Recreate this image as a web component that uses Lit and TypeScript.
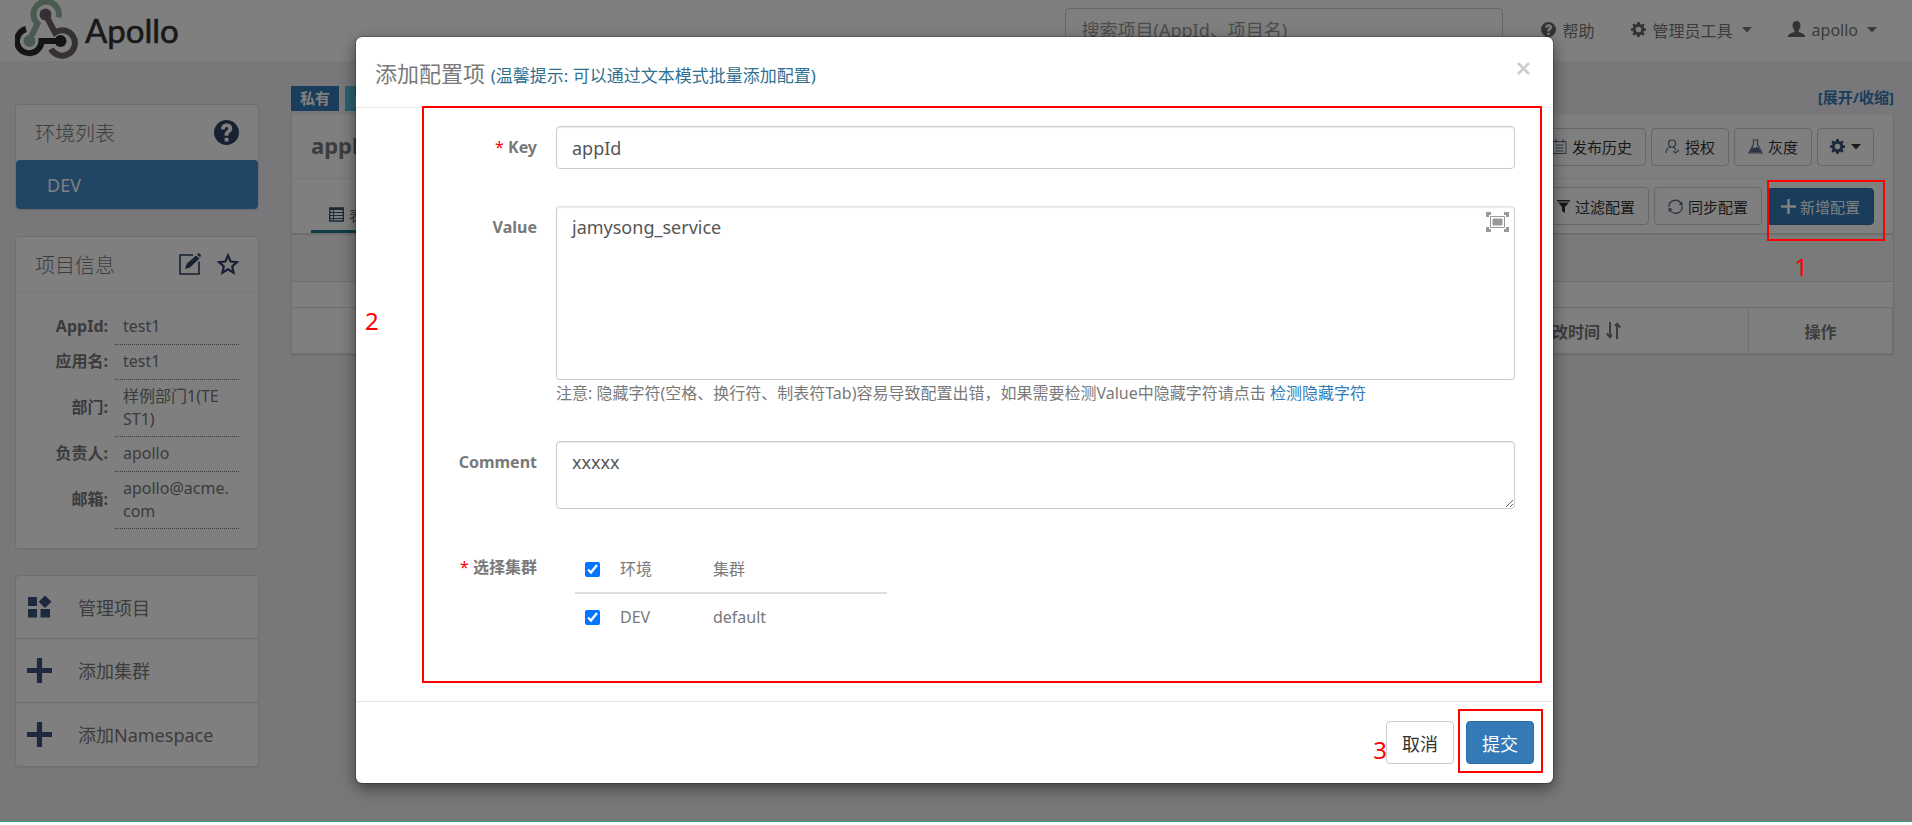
import { LitElement, html, css, svg } from "lit";
import { customElement } from "lit/decorators.js";

const base = css`
  *, *::before, *::after { box-sizing: border-box; }
  a { color: inherit; text-decoration: none; }
  button, input, textarea { font: inherit; margin: 0; }
  button { cursor: pointer; }
  svg { display: block; flex: none; }
`;

const caret = html`<svg width="10" height="6" viewBox="0 0 10 6" fill="currentColor"><path d="M0 0h10L5 5.5z"/></svg>`;

const helpIcon = (size: number) => html`<svg width=${size} height=${size} viewBox="0 0 24 24">
  <path fill="currentColor" fill-rule="evenodd" d="M12 0a12 12 0 1 1 0 24a12 12 0 0 1 0-24zM6.800 9h3.600c0-1.600.6-2.400 1.700-2.400 1 0 1.600.6 1.600 1.500 0 1-.7 1.500-1.600 2.300-1.300 1-1.900 1.900-1.900 3.900v.8h3.600v-.5c0-1.100.5-1.600 1.400-2.400 1.300-1 2.300-2 2.300-4 0-3-2.200-4.800-5.300-4.800-3.400 0-5.400 2-5.400 5.600zM10.200 17v3.600h3.700v-3.600z"/>
</svg>`;

const gearPath = svg`<path fill="currentColor" fill-rule="evenodd" d="M6.700 0h2.600l.4 2.200 1.300.6L12.900 1.500l1.700 1.700-1.300 1.900.6 1.300 2.100.4v2.500l-2.100.4-.6 1.300 1.300 1.900-1.700 1.700-1.900-1.300-1.300.6-.4 2.100H6.700l-.4-2.100-1.300-.6-1.900 1.300-1.700-1.700 1.300-1.900-.6-1.300L0 9.300V6.800l2.100-.4.6-1.300-1.300-1.900 1.700-1.700L5 2.800l1.300-.6zM8 5a3 3 0 1 0 0 6a3 3 0 0 0 0-6z"/>`;
const gearIcon = html`<svg width="15" height="15" viewBox="0 0 16 16">${gearPath}</svg>`;

const plusIcon = (size: number, thick: number) => html`<svg width=${size} height=${size} viewBox="0 0 24 24">
  <path stroke="currentColor" stroke-width=${thick} d="M12 0v24M0 12h24"/></svg>`;

@customElement("apollo-navbar")
class ApolloNavbar extends LitElement {
  static styles = [base, css`
    :host { display: block; background: #fff; }
    .bar { display: flex; align-items: center; height: 61px; padding: 0 35px 2px 15px; color: #777; }
    .brand { margin-right: auto; display: block; }
    .search { width: 438px; height: 43px; padding: 0 16px; border: 1px solid #ccc; border-radius: 4px; color: #555; font-size: 18px; background: #fff; margin-right: 36px; }
    .search::placeholder { color: #999; opacity: 1; }
    .item { display: flex; align-items: center; gap: 7px; font-size: 16px; margin-right: 34px; }
    .item:last-child { margin-right: 0; }
    .item .mark { color: #666; }
    .item svg:last-child { margin-left: 2px; }
  `];
  render() {
    return html`<nav class="bar">
      <a class="brand" href="#" aria-label="Apollo">
        <svg width="164" height="59" viewBox="0 1 164 59" fill="none">
          <g stroke-width="6">
            <path stroke="#93b5a0" d="M43.500 18.500A12.700 12.700 0 1 0 22.500 24.500L14 42"/>
            <path stroke="#6a6166" d="M30.500 15.500L40 33.500A12.700 12.700 0 1 1 36 50"/>
            <path stroke="#2a2a2a" d="M11 30A12.300 12.300 0 1 0 26.500 42H45"/>
          </g>
          <circle cx="14.500" cy="42" r="6" fill="#93b5a0"/>
          <circle cx="30.500" cy="15.500" r="6" fill="#6a6166"/>
          <circle cx="45.500" cy="42" r="6" fill="#2a2a2a"/>
          <text x="70" y="44" fill="#333" stroke="#333" stroke-width="0.600" font-family="Lato, sans-serif" font-size="33">Apollo</text>
        </svg>
      </a>
      <input class="search" type="text" aria-label="搜索项目" placeholder="搜索项目(AppId、项目名)">
      <a class="item" href="#"><span class="mark">${helpIcon(15)}</span>帮助</a>
      <a class="item" href="#"><span class="mark">${gearIcon}</span>管理员工具 ${caret}</a>
      <a class="item" href="#"><span class="mark"><svg width="17" height="17" viewBox="0 0 17 17" fill="currentColor"><path d="M8.500 0C11 0 12.500 1.700 12.500 4.300c0 2-.8 3.800-2 4.900v1.600c.5 1 6.500 1.700 6.500 4.400V16H0v-.8c0-2.700 6-3.400 6.500-4.400V9.200c-1.200-1.100-2-2.900-2-4.900C4.500 1.700 6 0 8.500 0z"/></svg></span>apollo ${caret}</a>
    </nav>`;
  }
}

@customElement("apollo-sidebar")
class ApolloSidebar extends LitElement {
  static styles = [base, css`
    :host { display: flex; flex-direction: column; gap: 26px; width: 244px; flex: none; }
    .card { background: #fff; border: 1px solid #ddd; border-radius: 4px; box-shadow: 0 1px 1px rgba(0,0,0,.05); }
    .head { display: flex; align-items: center; gap: 16px; height: 54px; padding: 0 19px; color: #797979; font-size: 20px; }
    .head .title { margin-right: auto; font-weight: 300; }
    .head .mark { color: #2e4363; }
    .env { display: flex; align-items: center; height: 49px; margin-top: 1px; padding: 0 31px; color: #fff; background: #428bca; border-radius: 4px; font-size: 18px; }
    .info { padding: 17px 19px 19px 18px; border-top: 1px solid #eee; }
    .table { width: 100%; border-collapse: collapse; font-size: 16px; line-height: 23px; color: #777; }
    .table th { width: 81px; text-align: right; padding: 0 7px 0 0; font-weight: 700; white-space: nowrap; }
    .table td { padding: 5px 8px; border-bottom: 1px dotted #777; word-break: break-all; white-space: pre-line; height: 35px; }
    .links a { display: flex; align-items: center; height: 64px; padding: 0 11px; gap: 26px; color: #797979; font-size: 18px; border-top: 1px solid #ddd; }
    .links a:first-child { border-top: 0; height: 62px; }
    .links .mark { color: #3a537b; }
  `];
  render() {
    const rows = [["AppId:", "test1"], ["应用名:", "test1"], ["部门:", "样例部门1(TE\nST1)"], ["负责人:", "apollo"], ["邮箱:", "apollo@acme.\ncom"]];
    return html`
      <section class="card">
        <header class="head"><span class="title">环境列表</span><span class="mark">${helpIcon(25)}</span></header>
        <a class="env" href="#">DEV</a>
      </section>
      <section class="card">
        <header class="head"><span class="title">项目信息</span>
          <span class="mark"><svg width="22" height="22" viewBox="0 0 22 22" fill="none"><path stroke="currentColor" stroke-width="1.600" d="M14 2H1v19h19V8.500"/><path fill="currentColor" d="M6 16l1.500-5L17 2.500 20.500 5.500 11 14.500zM18 1.500l1-1c1-1 3.500 1.500 2.800 2.500l-.8 1.200z"/></svg></span>
          <span class="mark"><svg width="22" height="22" viewBox="0 0 22 22" fill="none"><path stroke="currentColor" stroke-width="2.200" d="M11 2.500l2.600 6 6.400.6-4.800 4.300 1.400 6.300L11 16.400l-5.600 3.300 1.400-6.300L2 9.100l6.400-.6z"/></svg></span>
        </header>
        <div class="info"><table class="table"><tbody>
          ${rows.map(([k, v]) => html`<tr><th scope="row">${k}</th><td>${v}</td></tr>`)}
        </tbody></table></div>
      </section>
      <nav class="card links">
        <a href="#"><span class="mark"><svg width="25" height="24" viewBox="0 0 25 24" fill="currentColor"><path d="M1 2h9v9H1zM1 14h9v8.500H1zM13.500 14H23v8.500h-9.500zM18 .5l6.500 6.300L18 13l-6.300-6.200z"/></svg></span>管理项目</a>
        <a href="#"><span class="mark">${plusIcon(25, 5)}</span>添加集群</a>
        <a href="#"><span class="mark">${plusIcon(25, 5)}</span>添加Namespace</a>
      </nav>`;
  }
}

@customElement("apollo-namespace")
class ApolloNamespace extends LitElement {
  static styles = [base, css`
    :host { display: block; flex: 1; min-width: 0; }
    .top { display: flex; align-items: flex-start; gap: 6px; height: 29px; font-size: 15px; font-weight: 700; }
    .tag { display: flex; align-items: center; height: 25px; padding: 0 9px 2px; color: #fff; background: #337ab7; }
    .tag.kind { background: #5bc0de; }
    .toggle { margin-left: auto; color: #337ab7; font-size: 15px; line-height: 22px; }
    .panel { background: #fff; border: 1px solid #ddd; border-top: 0; box-shadow: 0 1px 1px rgba(0,0,0,.05); }
    .row { display: flex; align-items: center; height: 64px; padding: 0 19px; gap: 5px; border-bottom: 1px solid #eee; }
    .name { margin: 0 auto 0 0; padding-bottom: 4px; font-size: 22px; color: #797979; }
    .row.tools { height: 56px; border-bottom: 2px solid #ddd; }
    .tab { display: flex; align-items: center; gap: 5px; align-self: flex-end; height: 40px; margin-right: auto; padding: 6px 18px 0; border-bottom: 3px solid #22798b; font-size: 15px; color: #666; }
    .tab svg { color: #3a537b; }
    .btn { display: flex; align-items: center; gap: 5px; height: 38px; padding: 0 13px; border: 1px solid #ccc; border-radius: 4px; background: #fff; color: #333; font-size: 15px; white-space: nowrap; }
    .btn svg { color: #5a6b88; }
    .btn.menu { padding: 0 12px; gap: 6px; }
    .btn.menu svg:first-child { color: #3a537b; }
    .btn.menu svg:last-child, .btn.dark svg { color: #333; }
    .btn.primary { background: #337ab7; border-color: #2e6da4; color: #fff; gap: 4px; height: 37px; }
    .btn.primary svg { color: #fff; }
    .strip { height: 47px; background: #f5f5f5; border-bottom: 1px solid #ddd; }
    .gap { height: 25px; }
    .grid { width: 100%; border-collapse: collapse; font-size: 16px; color: #797979; table-layout: fixed; }
    .grid th { height: 46px; padding: 0; border: 1px solid #ddd; border-left: 0; font-weight: 700; }
    .grid th:nth-child(3) { width: 144px; }
    .grid th:nth-child(2) { width: 400px; }
    .sort { display: flex; justify-content: flex-end; align-items: center; gap: 6px; padding-right: 127px; }
  `];
  render() {
    return html`
      <div class="top"><span class="tag">私有</span><span class="tag kind">properties</span><a class="toggle" href="#">[展开/收缩]</a></div>
      <section class="panel">
        <header class="row"><h2 class="name">application</h2>
          <button class="btn"><svg width="15" height="15" viewBox="0 0 15 15" fill="none" stroke="currentColor"><path d="M1 2.500h13v12H1zM4 0v4M11 0v4M3.500 6h8M3.500 9h8M3.500 12h8"/></svg>发布历史</button>
          <button class="btn"><svg width="15" height="15" viewBox="0 0 15 15" fill="none" stroke="currentColor" stroke-width="1.200"><circle cx="7" cy="4.500" r="3.500"/><path d="M1 14c0-3 2-5.500 5-6M8 8c1.500.5 2.500 1.500 3 3M8.500 12l2 2L14 11"/></svg>授权</button>
          <button class="btn"><svg width="15" height="15" viewBox="0 0 15 15" fill="none" stroke="currentColor" stroke-width="1.200"><path d="M4.500 1h6M5.500 1v4.500L1 13.800h13L9.500 5.500V1"/><path fill="currentColor" d="M4.500 9l2 1 2-1.500 2 1.500 1.500 2.500H3z"/></svg>灰度</button>
          <button class="btn menu" aria-label="设置">${gearIcon}${caret}</button>
        </header>
        <div class="row tools">
          <a class="tab" href="#"><svg width="15" height="15" viewBox="0 0 15 15" fill="none" stroke="currentColor"><path d="M.7 1h13.600v13H.7z" stroke-width="1.400"/><path d="M1 2h13" stroke-width="2"/><path d="M1 5.500h13M1 8.500h13M1 11.500h13M4.500 2v12"/></svg>表格</a>
          <button class="btn dark"><svg width="13" height="13" viewBox="0 0 13 13" fill="currentColor"><path d="M0 0h13v1.500H0zM1 2.500h11L8 7v6L5 11V7z"/></svg>过滤配置</button>
          <button class="btn"><svg width="15" height="15" viewBox="0 0 15 15" fill="none" stroke="currentColor" stroke-width="1.400"><path d="M1 8A6.300 6.300 0 0 1 13 5M14 7A6.300 6.300 0 0 1 2 10.500M13.800 3v2.600h-2.500M1.200 12.500V10h2.500"/></svg>同步配置</button>
          <button class="btn primary">${plusIcon(15, 4)}新增配置</button>
        </div>
        <div class="strip"></div><div class="gap"></div>
        <table class="grid"><thead><tr><th></th><th><span class="sort">最后修改时间<svg width="15" height="17" viewBox="0 0 15 17" fill="none" stroke="currentColor" stroke-width="2"><path d="M4 0v15M.8 11.500L4 15.200l2-2.200M11 17V2M14.200 5.500L11 1.800 9 4"/></svg></span></th><th>操作</th></tr></thead></table>
      </section>`;
  }
}

@customElement("apollo-item-modal")
class ApolloItemModal extends LitElement {
  static styles = [base, css`
    :host { display: block; width: 1197px; max-width: 100%; background: #fff; border-radius: 6px; box-shadow: 0 5px 15px rgba(0,0,0,.5), 0 0 0 1px rgba(0,0,0,.2); color: #797979; position: relative; }
    .head { display: flex; align-items: center; height: 71px; padding: 0 19px; border-bottom: 1px solid #e5e5e5; }
    .title { margin: 0; margin-right: auto; font-size: 22px; font-weight: 400; }
    .tip { font-size: 17px; color: #31708f; }
    .close { display: flex; padding: 4px; border: 0; background: none; color: #ccc; margin-bottom: 8px; }
    .body { display: flex; flex-direction: column; min-height: 593px; padding: 18px 38px 0 40px; font-size: 16px; line-height: 22px; }
    .field { display: grid; grid-template-columns: 141px 1fr; column-gap: 19px; }
    .key, .value, .comment { margin-bottom: 37px; }
    .label { text-align: right; font-weight: 700; padding-top: 10px; }
    .req { color: red; font-weight: 400; }
    .control { display: block; width: 100%; padding: 8px 15px; border: 1px solid #ccc; border-radius: 4px; color: #555; font-size: 18px; line-height: 25px; background: #fff; box-shadow: inset 0 1px 1px rgba(0,0,0,.075); outline: 0; }
    input.control { height: 43px; }
    .editor { height: 174px; resize: none; border-top-color: #e5e5e5; }
    .note { height: 68px; resize: vertical; }
    .wrap { position: relative; }
    .full { position: absolute; right: 6px; top: 6px; padding: 0; border: 0; background: none; color: #999; }
    .hint { margin: 2px 0 0; white-space: nowrap; }
    .hint a { color: #337ab7; }
    .clusters { width: 312px; margin-left: 19px; border-collapse: collapse; table-layout: fixed; }
    .clusters th, .clusters td { height: 47px; padding: 0; text-align: left; font-weight: 400; }
    .clusters th { border-bottom: 2px solid #ddd; }
    .clusters .pick { width: 45px; padding-left: 10px; }
    .clusters .env { width: 93px; }
    .check { display: block; width: 15px; height: 15px; margin: 0; accent-color: #0075ff; }
    .foot { display: flex; justify-content: flex-end; gap: 12px; padding: 19px; border-top: 1px solid #e5e5e5; }
    .btn { height: 43px; padding: 0 15px; border: 1px solid #ccc; border-radius: 4px; background: #fff; color: #333; font-size: 18px; }
    .btn.primary { background: #337ab7; border-color: #2e6da4; color: #fff; }
  `];
  render() {
    return html`
      <header class="head">
        <h3 class="title">添加配置项 <span class="tip">(温馨提示: 可以通过文本模式批量添加配置)</span></h3>
        <button class="close" aria-label="关闭"><svg width="13" height="13" viewBox="0 0 13 13"><path stroke="currentColor" stroke-width="2.600" d="M1 1l11 11M12 1L1 12"/></svg></button>
      </header>
      <form class="body" @submit=${(e: Event) => e.preventDefault()}>
        <div class="field key"><label class="label" for="key"><span class="req">*</span> Key</label>
          <input class="control" id="key" type="text" .value=${"appId"}></div>
        <div class="field value"><label class="label" for="value">Value</label>
          <div><div class="wrap"><textarea class="control editor" id="value" .value=${"jamysong_service"}></textarea>
            <button class="full" type="button" aria-label="全屏"><svg width="23" height="20" viewBox="0 0 23 20" fill="none" stroke="currentColor"><path stroke-width="3" d="M1.500 5V1.500H5M18 1.500h3.500V5M21.500 15v3.500H18M5 18.500H1.500V15"/><path d="M4.500 4.500h14v11h-14z"/><path fill="currentColor" d="M7 7h9v6H7z"/></svg></button></div>
            <p class="hint">注意: 隐藏字符(空格、换行符、制表符Tab)容易导致配置出错，如果需要检测Value中隐藏字符请点击 <a href="#">检测隐藏字符</a></p></div></div>
        <div class="field comment"><label class="label" for="comment">Comment</label>
          <textarea class="control note" id="comment" .value=${"xxxxx"}></textarea></div>
        <div class="field"><span class="label"><span class="req">*</span> 选择集群</span>
          <table class="clusters"><thead><tr><th class="pick"><input class="check" type="checkbox" aria-label="全选" checked></th><th class="env">环境</th><th>集群</th></tr></thead>
            <tbody><tr><td class="pick"><input class="check" type="checkbox" aria-label="DEV default" checked></td><td>DEV</td><td>default</td></tr></tbody></table></div>
      </form>
      <footer class="foot"><button class="btn">取消</button><button class="btn primary">提交</button></footer>`;
  }
}

@customElement("app-root")
class AppRoot extends LitElement {
  static styles = [base, css`
    :host { display: block; position: relative; min-height: 100vh; background: #f1f1f5; overflow: hidden; font-family: "Noto Sans", "Noto Sans CJK SC", sans-serif; }
    .page { display: flex; align-items: flex-start; gap: 32px; padding: 25px 18px 0 15px; }
    .side { margin-top: 18px; }
    .backdrop { position: absolute; inset: 0; background: rgba(0,0,0,.5); display: flex; align-items: flex-start; justify-content: center; padding: 37px 3px 0 0; }
    .stage { position: relative; }
    .base { position: absolute; left: 0; right: 0; bottom: 0; height: 4px; background: #fff; border-top: 1px solid #3c9a7a; }
    .mark { position: absolute; border: 2px solid red; pointer-events: none; }
    .num { position: absolute; color: red; font-size: 24px; line-height: 24px; }
    .m2 { left: 66px; top: 69px; width: 1120px; height: 577px; }
    .m3 { right: 10px; bottom: 10px; width: 85px; height: 64px; }
    .n2 { left: 9px; top: 272px; }
    .n3 { right: 166px; bottom: 21px; }
    .m1 { right: 27px; top: 180px; width: 118px; height: 61px; }
    .n1 { right: 104px; top: 255px; }
  `];
  render() {
    return html`
      <apollo-navbar></apollo-navbar>
      <main class="page"><apollo-sidebar class="side"></apollo-sidebar><apollo-namespace></apollo-namespace></main>
      <div class="backdrop"><div class="stage">
        <apollo-item-modal></apollo-item-modal>
        <span class="mark m2"></span><span class="mark m3"></span>
        <span class="num n2">2</span><span class="num n3">3</span>
      </div></div>
      <span class="mark m1"></span><span class="num n1">1</span>
      <div class="base"></div>`;
  }
}
